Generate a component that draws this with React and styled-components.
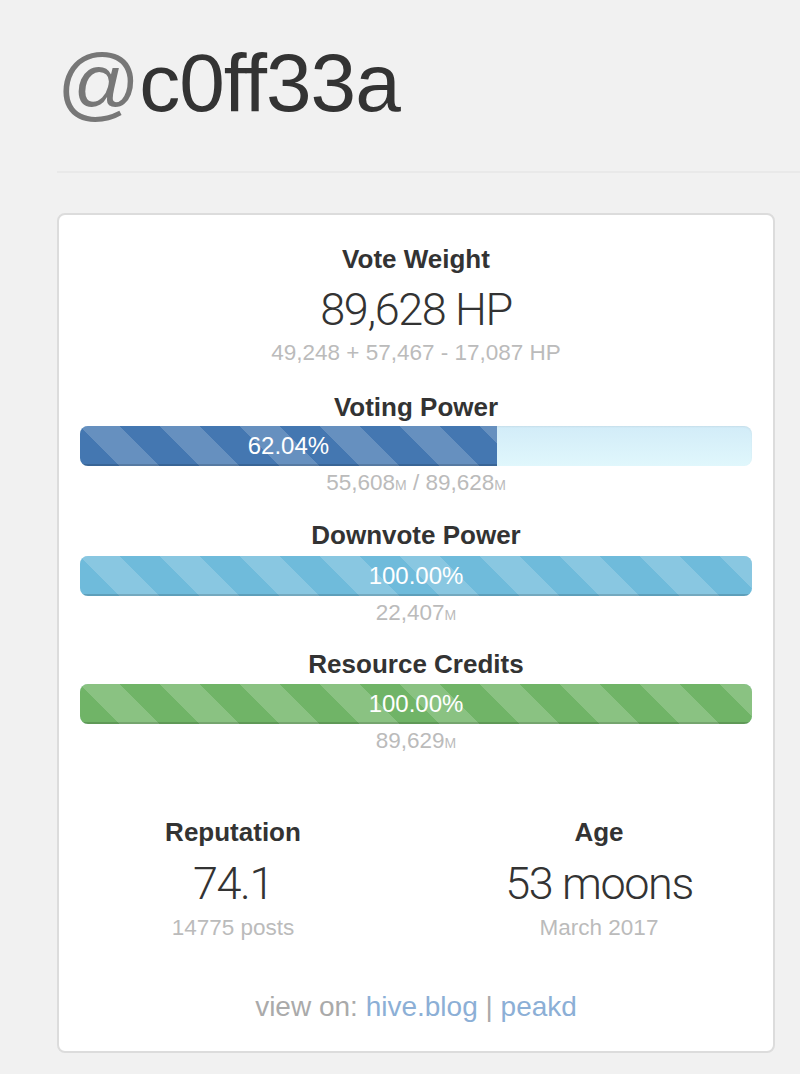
import React from 'react';
import styled, { createGlobalStyle } from 'styled-components';

const GlobalStyle = createGlobalStyle`
    html, body {
        margin: 0;
        padding: 0;
        background: #f1f1f1;
        font-family: "Liberation Sans", Arial, sans-serif;
        color: #333;
    }
`;

const Page = styled.div`
    padding: 42px 0 0 57px;
    overflow: hidden;
`;

const Title = styled.h1`
    margin: 0;
    font-size: 82px;
    line-height: 82px;
    font-weight: 400;
    color: #333;
    letter-spacing: -1px;
`;

const At = styled.span`
    color: #777;
`;

const Rule = styled.hr`
    margin: 47px 0 40px 0;
    border: 0;
    border-top: 2px solid #e9e9e9;
`;

const Card = styled.div`
    width: 718px;
    box-sizing: border-box;
    background: #fff;
    border: 2px solid #dcdcdc;
    border-radius: 8px;
    padding: 26px 21px 26px;
    text-align: center;
`;

const Label = styled.div`
    font-size: 26px;
    line-height: 36px;
    font-weight: 700;
    color: #333;
`;

const Big = styled.div`
    font-family: Roboto, "Liberation Sans", sans-serif;
    font-weight: 300;
    font-size: 45px;
    line-height: 52px;
    letter-spacing: -1.4px;
    color: #333;
    margin-top: ${p => p.$top || 0}px;
`;

const Sub = styled.div`
    font-size: 22.5px;
    line-height: 30px;
    color: #bbb;
    margin-top: ${p => p.$top || 0}px;

    small {
        font-size: 14px;
    }
`;

const Section = styled.div`
    margin-top: ${p => p.$top}px;
`;

const Track = styled.div`
    height: 40px;
    margin-top: ${p => p.$top || 1}px;
    border-radius: 8px;
    overflow: hidden;
    display: flex;
    background: linear-gradient(to bottom, #d2ecf8, #e0f7fc);
    box-shadow: inset 0 1px 2px rgba(0, 0, 0, 0.06);
`;

const Fill = styled.div`
    height: 100%;
    background-color: ${p => p.$color};
    background-image: linear-gradient(
        45deg,
        rgba(255, 255, 255, 0.18) 25%,
        transparent 25%,
        transparent 50%,
        rgba(255, 255, 255, 0.18) 50%,
        rgba(255, 255, 255, 0.18) 75%,
        transparent 75%,
        transparent
    );
    background-size: 80px 80px;
    box-shadow: inset 0 -2px 0 rgba(0, 0, 0, 0.15);
    color: #fff;
    font-size: 24px;
    line-height: 40px;
    text-align: center;
`;

const Columns = styled.div`
    display: grid;
    grid-template-columns: 1fr 1fr;
    margin: 56px -30px 0;
`;

const Column = styled.div`
    text-align: center;
`;

const Links = styled.div`
    margin-top: 46px;
    font-size: 28px;
    line-height: 36px;
    color: #aaa;

    a {
        color: #8cafd6;
        text-decoration: none;
    }
`;

const Bar = ({ label, color, pct, text, sub, top, barTop }) => (
    <Section $top={top}>
        <Label>{label}</Label>
        <Track $top={barTop}>
            <Fill $color={color} style={{ width: pct + '%' }}>{text}</Fill>
        </Track>
        <Sub $top={2}>{sub}</Sub>
    </Section>
);

export default () => {
    return (
        <Page>
            <GlobalStyle />
            <Title><At>@</At>c0ff33a</Title>
            <Rule />

            <Card>
                <Label>Vote Weight</Label>
                <Big $top={7}>89,628 HP</Big>
                <Sub $top={2}>49,248 + 57,467 - 17,087 HP</Sub>

                <Bar
                    label="Voting Power"
                    color="#4477b1"
                    pct={62.04}
                    text="62.04%"
                    top={21}
                    barTop={1}
                    sub={<>55,608<small>M</small> / 89,628<small>M</small></>}
                />
                <Bar
                    label="Downvote Power"
                    color="#6fbbdb"
                    pct={100}
                    text="100.00%"
                    top={17}
                    barTop={3}
                    sub={<>22,407<small>M</small></>}
                />
                <Bar
                    label="Resource Credits"
                    color="#70b467"
                    pct={100}
                    text="100.00%"
                    top={16}
                    barTop={2}
                    sub={<>89,629<small>M</small></>}
                />

                <Columns>
                    <Column>
                        <Label>Reputation</Label>
                        <Big $top={8}>74.1</Big>
                        <Sub $top={3}>14775 posts</Sub>
                    </Column>
                    <Column>
                        <Label>Age</Label>
                        <Big $top={8}>53 moons</Big>
                        <Sub $top={3}>March 2017</Sub>
                    </Column>
                </Columns>

                <Links>
                    view on: <a href="#">hive.blog</a> | <a href="#">peakd</a>
                </Links>
            </Card>
        </Page>
    );
};
